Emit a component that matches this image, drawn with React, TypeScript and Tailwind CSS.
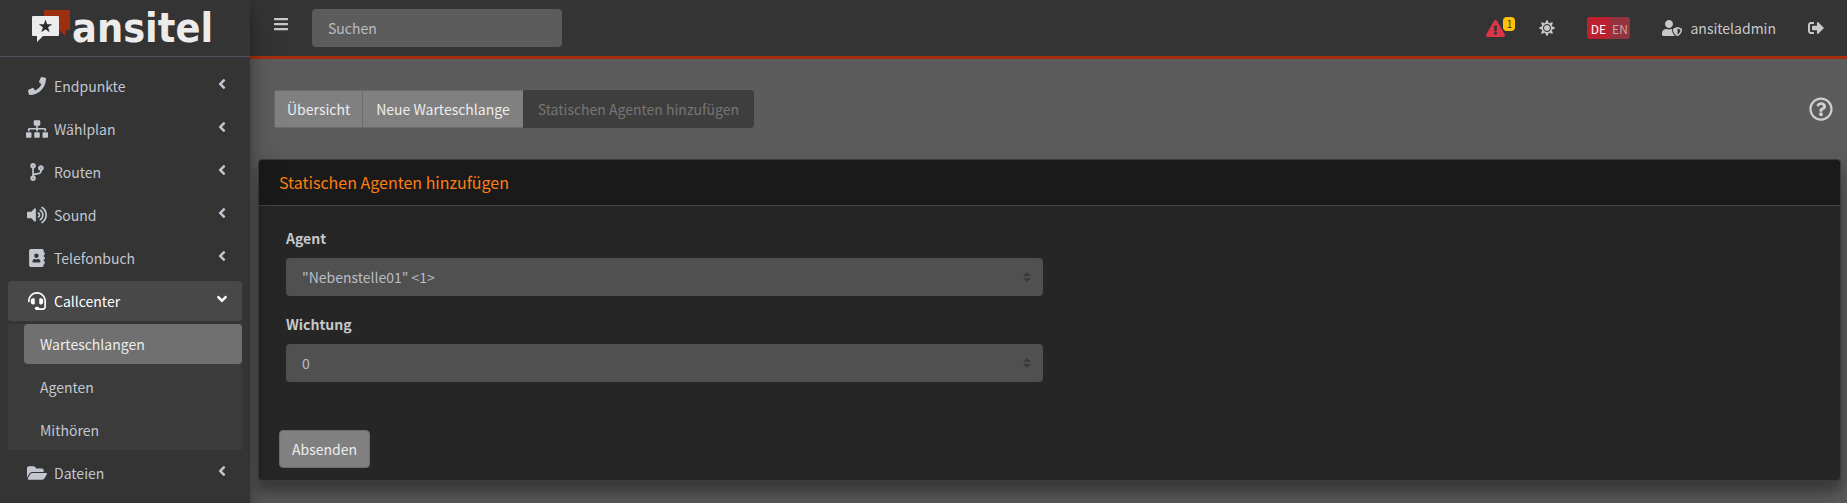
import { useState } from "react";
import type { IconType } from "react-icons";
import {
  FaAddressBook,
  FaAngleDown,
  FaAngleLeft,
  FaBars,
  FaCodeBranch,
  FaExclamationTriangle,
  FaFolderOpen,
  FaHeadset,
  FaPhone,
  FaRegQuestionCircle,
  FaSignOutAlt,
  FaSitemap,
  FaSun,
  FaUserShield,
  FaVolumeUp,
} from "react-icons/fa";

interface NavEntry {
  label: string;
  icon: IconType;
  iconSize: string;
  children?: string[];
}

const navEntries: NavEntry[] = [
  { label: "Endpunkte", icon: FaPhone, iconSize: "text-[18px]" },
  { label: "Wählplan", icon: FaSitemap, iconSize: "text-[22px]" },
  { label: "Routen", icon: FaCodeBranch, iconSize: "text-[18px]" },
  { label: "Sound", icon: FaVolumeUp, iconSize: "text-[20px]" },
  { label: "Telefonbuch", icon: FaAddressBook, iconSize: "text-[18px]" },
  {
    label: "Callcenter",
    icon: FaHeadset,
    iconSize: "text-[18px]",
    children: ["Warteschlangen", "Agenten", "Mithören"],
  },
  { label: "Dateien", icon: FaFolderOpen, iconSize: "text-[20px]" },
];

function Logo() {
  return (
    <a href="#" className="flex h-[57px] shrink-0 items-center border-b border-[#4b545c] pl-8 text-[#ececec]">
      <svg viewBox="0 0 38 32" className="mb-1 h-8 w-[38px] shrink-0" aria-hidden="true">
        <path d="M13 0H37Q38 0 38 1V20H33.500V26L27 20H12V1Q12 0 13 0Z" fill="#9c2f10" />
        <path d="M1 6H26Q27 6 27 7V25Q27 26 26 26H11L5 32V26H1Q0 26 0 25V7Q0 6 1 6Z" fill="#ececec" />
        <path
          d="M13.500 9.500L15.100 14.300H20.200L16.100 17.300L17.600 22.200L13.500 19.200L9.400 22.200L10.900 17.300L6.800 14.300H11.900Z"
          fill="#2b2b2b"
        />
      </svg>
      <span className="ml-[2px] font-['DejaVu_Sans_Condensed','DejaVu_Sans',sans-serif] text-[41px] leading-[56px] font-bold">
        ansitel
      </span>
    </a>
  );
}

function Sidebar() {
  const [open, setOpen] = useState<string>("Callcenter");

  return (
    <aside className="relative z-10 flex w-[250px] shrink-0 flex-col bg-[#343434] shadow-[0_14px_28px_rgba(0,0,0,0.25),0_10px_10px_rgba(0,0,0,0.22)]">
      <Logo />
      <nav className="flex flex-col gap-[3px] px-2 pt-[9px]">
        {navEntries.map((entry) => {
          const Icon = entry.icon;
          const isOpen = entry.children !== undefined && open === entry.label;
          return (
            <div key={entry.label}>
              <button
                type="button"
                onClick={() => setOpen(isOpen ? "" : entry.label)}
                className={`flex h-10 w-full items-center rounded pr-3 pl-4 text-left ${
                  isOpen ? "bg-[#484848] text-white" : "text-[#c2c7d0]"
                }`}
              >
                <span className={`mr-1 flex w-[26px] justify-center ${entry.iconSize}`}>
                  <Icon />
                </span>
                <span className="grow">{entry.label}</span>
                {isOpen ? <FaAngleDown className="mb-1 text-base" /> : <FaAngleLeft className="mb-1 text-base" />}
              </button>
              {isOpen && (
                <ul className="mt-[3px] flex flex-col gap-[3px] bg-[#3b3b3b] pl-4">
                  {entry.children?.map((child, i) => (
                    <li key={child}>
                      <a
                        href="#"
                        className={`flex h-10 items-center rounded px-4 ${
                          i === 0 ? "bg-[#707070] text-[#ededed]" : "text-[#c2c7d0]"
                        }`}
                      >
                        {child}
                      </a>
                    </li>
                  ))}
                </ul>
              )}
            </div>
          );
        })}
      </nav>
    </aside>
  );
}

function Navbar() {
  const [search, setSearch] = useState<string>("");

  return (
    <header className="flex h-[59px] items-center border-b-[3px] border-[#a62e0c] bg-[#343434] pr-[23px] pl-[23px] text-[#c8c8c8]">
      <button type="button" aria-label="Menü" className="mb-2 text-base">
        <FaBars />
      </button>
      <input
        type="search"
        aria-label="Suchen"
        placeholder="Suchen"
        value={search}
        onChange={(e) => setSearch(e.target.value)}
        className="mr-auto ml-[23px] h-[38px] w-[250px] rounded bg-[#5c5c5c] px-4 placeholder:text-[#b8bdc6]"
      />
      <div className="flex items-center gap-8">
        <a href="#" aria-label="Warnungen" className="relative pr-[10px] text-[19px] text-[#dc3545]">
          <FaExclamationTriangle />
          <span className="absolute -top-[2px] right-0 flex h-[14px] w-3 items-center justify-center rounded bg-[#ffc107] text-[10px] text-[#343434]">
            1
          </span>
        </a>
        <button type="button" aria-label="Helligkeit" className="-ml-2 text-base">
          <FaSun />
        </button>
        <div className="flex h-[22px] overflow-hidden rounded-[3px] text-[12px]">
          <button type="button" className="w-[22px] bg-[#bd2130] text-white">DE</button>
          <button type="button" className="w-[21px] bg-[#94323d] text-[#cfa3a8]">EN</button>
        </div>
        <a href="#" className="flex items-center gap-2">
          <FaUserShield className="text-[20px]" />
          ansiteladmin
        </a>
        <button type="button" aria-label="Abmelden" className="text-base">
          <FaSignOutAlt />
        </button>
      </div>
    </header>
  );
}

function SelectField({ id, label, options }: { id: string; label: string; options: string[] }) {
  return (
    <div>
      <label htmlFor={id} className="mb-2 block leading-6 font-bold text-[#c8c8c8]">
        {label}
      </label>
      <div className="relative">
        <select id={id} className="block h-[38px] w-full appearance-none rounded bg-[#505050] px-4 text-[#b8bdc6]">
          {options.map((option) => (
            <option key={option}>{option}</option>
          ))}
        </select>
        <svg
          viewBox="0 0 4 5"
          className="pointer-events-none absolute top-[14px] right-3 h-[10px] w-2"
          fill="#343a40"
          aria-hidden="true"
        >
          <path d="M2 0L0 2h4zm0 5L0 3h4z" />
        </svg>
      </div>
    </div>
  );
}

export default function App() {
  return (
    <div className="flex min-h-screen bg-[#5c5c5c] font-['Noto_Sans_CJK_SC',sans-serif] text-[14px] leading-6">
      <Sidebar />
      <div className="flex min-w-0 grow flex-col">
        <Navbar />
        <main className="pt-[31px] pr-[6px] pl-2">
          <div className="flex items-center justify-between pr-2 pl-4">
            <div className="flex h-[38px] overflow-hidden rounded">
              <a href="#" className="flex items-center border border-[#6c6c6c] bg-[#808080] px-3 text-[#ededed]">
                Übersicht
              </a>
              <a
                href="#"
                className="flex items-center border-y border-[#6c6c6c] bg-[#808080] px-[13px] text-[#ededed]"
              >
                Neue Warteschlange
              </a>
              <span className="flex items-center bg-[#3e3e3e] px-[15px] text-[#757575]">
                Statischen Agenten hinzufügen
              </span>
            </div>
            <button type="button" aria-label="Hilfe" className="text-2xl text-[#d0d0d0]">
              <FaRegQuestionCircle />
            </button>
          </div>

          <form
            onSubmit={(e) => e.preventDefault()}
            className="mt-[31px] rounded border border-[#3c3c3c] bg-[#262626] shadow-[0_14px_28px_rgba(0,0,0,0.25),0_10px_10px_rgba(0,0,0,0.22)]"
          >
            <h3 className="rounded-t border-b border-[#3f4347] bg-[#1a1a1a] px-5 pt-[10px] pb-[11px] text-[16px] text-[#fd7e14]">
              Statischen Agenten hinzufügen
            </h3>
            <div className="grid grid-cols-2 px-5 pt-5 pb-12">
              <div className="flex flex-col gap-4 px-[7px]">
                <SelectField id="agent" label="Agent" options={['"Nebenstelle01" <1>']} />
                <SelectField id="weight" label="Wichtung" options={["0", "1", "2", "3", "4", "5"]} />
              </div>
            </div>
            <div className="px-5 pb-3">
              <button
                type="submit"
                className="h-[38px] rounded border border-[#6c6c6c] bg-[#808080] px-3 text-[#ededed]"
              >
                Absenden
              </button>
            </div>
          </form>
        </main>
      </div>
    </div>
  );
}
